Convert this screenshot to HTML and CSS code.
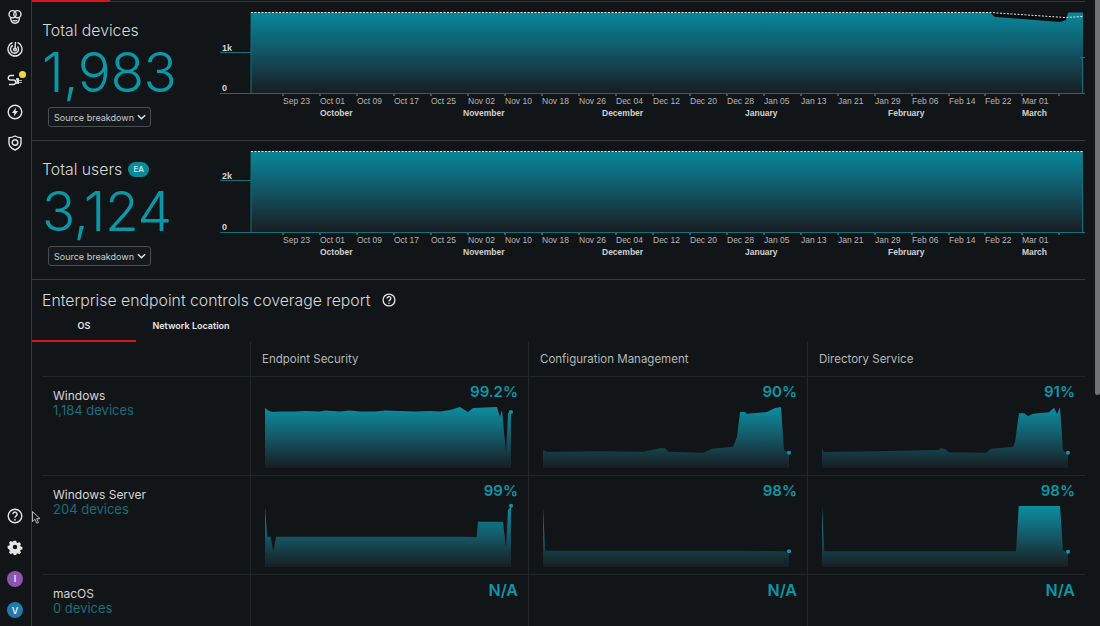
FILE: index.html
```html
<!DOCTYPE html>
<html lang="en">
<head>
    <meta charset="UTF-8">
    <meta name="viewport" content="width=device-width, initial-scale=1.0">
    <title>Devices overview</title>
    <link rel="stylesheet" href="styles.css">
</head>
<body>

    <div class="app">
        <nav class="sidebar">
            <div class="nav-group">
                <svg class="nav-icon" viewBox="0 0 16 16">
                    <circle cx="5.6" cy="5.2" r="3.6"/>
                    <circle cx="10.4" cy="5.2" r="3.6"/>
                    <path d="M3.6 8.5c0 3 1.5 5.7 4.4 5.7s4.400-2.700 4.400-5.700"/>
                    <path d="M5.500 11.800h5"/>
                </svg>
                <svg class="nav-icon" viewBox="0 0 16 16">
                    <path d="M5.500 1.500a7 7 0 1 0 5 0"/>
                    <path d="M6 4.500a4 4 0 1 0 4.500 1"/>
                    <circle cx="8" cy="8.500" r="1.400"/>
                    <path d="M8 8.500 8.500 1"/>
                </svg>
                <div class="nav-alert">
                    <svg class="nav-icon" viewBox="0 0 16 16">
                        <path d="M7 3.500H3.500a2 2 0 0 0 0 4.500h3a2 2 0 0 1 0 4.500H2"/>
                        <path d="M9 7h3M9 11h3"/>
                        <path class="solid" d="M9.500 6.500h2.500v5H9.500zM12 8h3v.8h-3zM12 10h3v.8h-3z"/>
                    </svg>
                    <span class="alert-dot"></span>
                </div>
                <svg class="nav-icon" viewBox="0 0 16 16">
                    <circle cx="8" cy="8" r="6.800"/>
                    <path class="solid" d="M9 3.500 5 9h2.400L6.800 12.500 11 7H8.500z"/>
                </svg>
                <svg class="nav-icon" viewBox="0 0 16 16">
                    <path d="M8 1c2 1.200 3.800 1.700 6 1.800v5c0 3.400-2.500 5.800-6 7.200-3.500-1.400-6-3.800-6-7.200v-5C4.200 2.700 6 2.200 8 1z"/>
                    <circle cx="8" cy="7.500" r="2.800"/>
                </svg>
            </div>
            <div class="nav-group">
                <svg class="nav-icon" viewBox="0 0 16 16">
                    <circle cx="8" cy="8" r="6.800"/>
                    <path d="M5.900 6.200a2.100 2.100 0 1 1 3.300 1.700c-.8.500-1.200 1-1.200 1.900"/>
                    <circle class="solid" cx="8" cy="11.800" r=".9"/>
                </svg>
                <svg class="nav-icon" viewBox="-1 -1 18 18">
                    <path class="solid" fill-rule="evenodd" d="M6.600 1h2.800l.4 1.900 1.300.6 1.700-1 2 2-1 1.700.6 1.300 1.900.4v2.800l-1.900.4-.6 1.300 1 1.700-2 2-1.700-1-1.300.6-.4 1.900H6.600l-.4-1.900-1.300-.6-1.700 1-2-2 1-1.700-.6-1.300L-.3 9.400V6.600l1.900-.4.600-1.300-1-1.700 2-2 1.700 1 1.300-.6zM8 5.500a2.500 2.500 0 1 0 0 5 2.500 2.500 0 0 0 0-5z"/>
                </svg>
                <span class="avatar avatar-purple">I</span>
                <span class="avatar avatar-blue">V</span>
            </div>
        </nav>

        <main class="content">
            <div class="top-bar"><span class="top-bar-active"></span></div>

            <section class="stat-row">
                <div class="stat">
                    <h2 class="stat-title">Total devices</h2>
                    <div class="stat-value">1,983</div>
                    <button class="select">Source breakdown
                        <svg class="chevron" viewBox="0 0 10 6"><path d="M1 1l4 4 4-4"/></svg>
                    </button>
                </div>
                <svg class="trend" viewBox="0 0 866 122">
                    <defs>
                        <linearGradient id="trendFill" gradientUnits="userSpaceOnUse" x1="0" y1="10" x2="0" y2="91">
                            <stop offset="0" stop-color="#07899b"/>
                            <stop offset="0.5" stop-color="#125364"/>
                            <stop offset="1" stop-color="#191d21"/>
                        </linearGradient>
                    </defs>
                    <path class="trend-gap" d="M770 10.500 775 15 840 20 846 18 848 10.500 862 14.500z"/>
                    <path fill="url(#trendFill)" d="M31 91V10.500H770L775 15 840 20 846 18 848 10.500H863V91z"/>
                    <path class="trend-edge" d="M31 10V91M862.500 55V91M0 50.500H31M0 91.500H865M860 55.500H865"/>
                    <path class="trend-forecast" d="M31 10.500H770L845 15.500 863 14.500"/>
                    <text class="axis-y" x="2" y="49">1k</text>
                    <text class="axis-y" x="2" y="89">0</text>
                    <g class="ticks">
                        <path d="M63 92v2M100 92v2M137 92v2M174 92v2M211 92v2M248 92v2M285 92v2M322 92v2M359 92v2M396 92v2M433 92v2M470 92v2M507 92v2M544 92v2M581 92v2M618 92v2M655 92v2M692 92v2M729 92v2M765 92v2M802 92v2M839 92v2"/>
                    </g>
                    <g class="axis-x">
                        <text x="63" y="102">Sep 23</text><text x="100" y="102">Oct 01</text><text x="137" y="102">Oct 09</text><text x="174" y="102">Oct 17</text><text x="211" y="102">Oct 25</text><text x="248" y="102">Nov 02</text><text x="285" y="102">Nov 10</text><text x="322" y="102">Nov 18</text><text x="359" y="102">Nov 26</text><text x="396" y="102">Dec 04</text><text x="433" y="102">Dec 12</text><text x="470" y="102">Dec 20</text><text x="507" y="102">Dec 28</text><text x="544" y="102">Jan 05</text><text x="581" y="102">Jan 13</text><text x="618" y="102">Jan 21</text><text x="655" y="102">Jan 29</text><text x="692" y="102">Feb 06</text><text x="729" y="102">Feb 14</text><text x="765" y="102">Feb 22</text><text x="802" y="102">Mar 01</text>
                    </g>
                    <g class="axis-month">
                        <text x="100" y="114">October</text><text x="243" y="114">November</text><text x="382" y="114">December</text><text x="525" y="114">January</text><text x="668" y="114">February</text><text x="802" y="114">March</text>
                    </g>
                </svg>
            </section>

            <section class="stat-row">
                <div class="stat">
                    <h2 class="stat-title">Total users <span class="badge">EA</span></h2>
                    <div class="stat-value">3,124</div>
                    <button class="select">Source breakdown
                        <svg class="chevron" viewBox="0 0 10 6"><path d="M1 1l4 4 4-4"/></svg>
                    </button>
                </div>
                <svg class="trend" viewBox="0 0 866 122">
                    <path fill="url(#trendFill)" d="M31 91V10.500H863V91z"/>
                    <path class="trend-edge" d="M31 10V91M862.500 10V91M0 39.500H31M0 91.500H865"/>
                    <path class="trend-forecast" d="M31 10.500H863"/>
                    <text class="axis-y" x="2" y="38">2k</text>
                    <text class="axis-y" x="2" y="89">0</text>
                    <g class="ticks">
                        <path d="M63 92v2M100 92v2M137 92v2M174 92v2M211 92v2M248 92v2M285 92v2M322 92v2M359 92v2M396 92v2M433 92v2M470 92v2M507 92v2M544 92v2M581 92v2M618 92v2M655 92v2M692 92v2M729 92v2M765 92v2M802 92v2M839 92v2"/>
                    </g>
                    <g class="axis-x">
                        <text x="63" y="102">Sep 23</text><text x="100" y="102">Oct 01</text><text x="137" y="102">Oct 09</text><text x="174" y="102">Oct 17</text><text x="211" y="102">Oct 25</text><text x="248" y="102">Nov 02</text><text x="285" y="102">Nov 10</text><text x="322" y="102">Nov 18</text><text x="359" y="102">Nov 26</text><text x="396" y="102">Dec 04</text><text x="433" y="102">Dec 12</text><text x="470" y="102">Dec 20</text><text x="507" y="102">Dec 28</text><text x="544" y="102">Jan 05</text><text x="581" y="102">Jan 13</text><text x="618" y="102">Jan 21</text><text x="655" y="102">Jan 29</text><text x="692" y="102">Feb 06</text><text x="729" y="102">Feb 14</text><text x="765" y="102">Feb 22</text><text x="802" y="102">Mar 01</text>
                    </g>
                    <g class="axis-month">
                        <text x="100" y="114">October</text><text x="243" y="114">November</text><text x="382" y="114">December</text><text x="525" y="114">January</text><text x="668" y="114">February</text><text x="802" y="114">March</text>
                    </g>
                </svg>
            </section>

            <section class="report">
                <h2 class="report-title">Enterprise endpoint controls coverage report
                    <svg class="help" viewBox="0 0 16 16">
                        <circle cx="8" cy="8" r="6.800"/>
                        <path d="M5.900 6.200a2.100 2.100 0 1 1 3.300 1.700c-.8.500-1.200 1-1.200 1.900"/>
                        <circle class="solid" cx="8" cy="11.800" r=".9"/>
                    </svg>
                </h2>
                <div class="tabs">
                    <span class="tab tab-active">OS</span>
                    <span class="tab">Network Location</span>
                </div>

                <div class="coverage">
                    <div class="cell head-cell"></div>
                    <div class="cell head-cell">Endpoint Security</div>
                    <div class="cell head-cell">Configuration Management</div>
                    <div class="cell head-cell">Directory Service</div>

                    <div class="cell os-cell">
                        <div class="os-name">Windows</div>
                        <div class="os-count">1,184 devices</div>
                    </div>
                    <div class="cell">
                        <div class="pct">99.2%</div>
                        <svg class="spark" viewBox="0 0 250 68">
                            <defs>
                                <linearGradient id="sparkFill" gradientUnits="userSpaceOnUse" x1="0" y1="0" x2="0" y2="64">
                                    <stop offset="0" stop-color="#0a93a6"/>
                                    <stop offset="0.5" stop-color="#145a69"/>
                                    <stop offset="1" stop-color="#181d21"/>
                                </linearGradient>
                            </defs>
                            <path fill="url(#sparkFill)" d="M0 64V4L4 7 8 8 14 7.500 30 7.500 40 7 55 7.500 60 6.500 75 7.500 85 6.500 95 7.500 110 7.500 120 6.500 135 7 150 7.500 165 7 175 7.500 185 6 195 3 203 8 208 4 232 3 235 13 237 6 241 49 243 9 246 8V64z"/>
                            <circle class="spark-dot" cx="246" cy="8" r="2"/>
                        </svg>
                    </div>
                    <div class="cell">
                        <div class="pct">90%</div>
                        <svg class="spark" viewBox="0 0 250 68">
                            <path fill="url(#sparkFill)" d="M0 64V46L4 48 54 47.300 100 47.700 117 44.300 122 44.300 125 47.700 160 48.700 169 44.700 190 42.700 194 32.700 197 8 202 8 204 9.700 224 8 232 4 238 3 241 46 244 48.300 246 48.700V64z"/>
                            <circle class="spark-dot" cx="246" cy="48.700" r="2"/>
                        </svg>
                    </div>
                    <div class="cell">
                        <div class="pct">91%</div>
                        <svg class="spark" viewBox="0 0 250 68">
                            <path fill="url(#sparkFill)" d="M0 64V44.700L2 48 56 47.300 116 46 119 44.300 123 45 127 48.300 164 48.700 169 44.700 191 42.700 193 37.700 197 9.300 202 9.300 206 12 211 9.700 227 8.300 232 3.700 235 10 238 3.300 241 46 243 48 246 48.700V64z"/>
                            <circle class="spark-dot" cx="246" cy="48.700" r="2"/>
                        </svg>
                    </div>

                    <div class="cell os-cell">
                        <div class="os-name">Windows Server</div>
                        <div class="os-count">204 devices</div>
                    </div>
                    <div class="cell">
                        <div class="pct">99%</div>
                        <svg class="spark" viewBox="0 0 250 68">
                            <path fill="url(#sparkFill)" d="M0 64V4.300L2.300 33.700 5.700 33.700 8.300 48.700 11 33.700 195 33.700 211.700 34 213 18.700 238 18.700 241 45.300 243 7 246 2.700V64z"/>
                            <circle class="spark-dot" cx="246" cy="2.700" r="2"/>
                        </svg>
                    </div>
                    <div class="cell">
                        <div class="pct">98%</div>
                        <svg class="spark" viewBox="0 0 250 68">
                            <path fill="url(#sparkFill)" d="M0 64V5.300L2.300 47.700 193.700 47.700 246 48.300V64z"/>
                            <circle class="spark-dot" cx="246" cy="48.300" r="2"/>
                        </svg>
                    </div>
                    <div class="cell">
                        <div class="pct">98%</div>
                        <svg class="spark" viewBox="0 0 250 68">
                            <path fill="url(#sparkFill)" d="M0 64V3.700L2.300 48.300 194 48.300 196.700 3 238 3 241 47 243.300 48.700 246 48.700V64z"/>
                            <circle class="spark-dot" cx="246" cy="48.700" r="2"/>
                        </svg>
                    </div>

                    <div class="cell os-cell">
                        <div class="os-name">macOS</div>
                        <div class="os-count">0 devices</div>
                    </div>
                    <div class="cell"><div class="pct pct-na">N/A</div></div>
                    <div class="cell"><div class="pct pct-na">N/A</div></div>
                    <div class="cell"><div class="pct pct-na">N/A</div></div>
                </div>
            </section>
        </main>

        <div class="scrollbar"><div class="scrollbar-thumb"></div></div>
    </div>

    <!-- mouse pointer caught in the capture -->
    <svg class="pointer" viewBox="0 0 9 13">
        <path d="M.5.500v10l2.500-2.200 1.800 4 1.700-.8-1.800-3.800h3.300z"/>
    </svg>

</body>
</html>
```

FILE: styles.css
```css
* {
    box-sizing: border-box;
}

html,
body {
    height: 100%;
    margin: 0;
}

body {
    position: relative;
    overflow: hidden;
    background-color: #111517;
    color: #d4d6d7;
    font-family: Inter, "Noto Sans", sans-serif;
}

.app {
    display: flex;
    height: 626px;
    overflow: hidden;
}

/* Sidebar */
.sidebar {
    flex: 0 0 32px;
    display: flex;
    flex-direction: column;
    justify-content: space-between;
    align-items: center;
    padding: 9px 1px 8px 0;
    border-right: 1px solid #35393b;
}

.nav-group {
    display: flex;
    flex-direction: column;
    align-items: center;
    gap: 15.5px;
}

.nav-icon {
    display: block;
    width: 16px;
    height: 16px;
    fill: none;
    stroke: #e4e6e6;
    stroke-width: 1.4;
}

.nav-icon .solid,
.help .solid {
    fill: #e4e6e6;
    stroke: none;
}

.nav-alert {
    position: relative;
}

.alert-dot {
    position: absolute;
    top: -1px;
    right: -3px;
    width: 7px;
    height: 7px;
    border-radius: 50%;
    background-color: #f0d83c;
}

.avatar {
    display: flex;
    justify-content: center;
    align-items: center;
    width: 16px;
    height: 16px;
    border-radius: 50%;
    color: #f0f0f0;
    font-size: 9px;
    font-weight: 600;
}

.avatar-purple {
    background-color: #8f55ae;
}

.avatar-blue {
    background-color: #2179ad;
}

/* Main column */
.content {
    flex: 0 0 1053px;
    min-width: 0;
}

.top-bar {
    height: 2px;
    border-bottom: 1px solid #35393b;
}

.top-bar-active {
    display: block;
    width: 78px;
    height: 2px;
    background-color: #d9141c;
}

.stat-row {
    display: flex;
    height: 139px;
    border-bottom: 1px solid #35393b;
}

.stat {
    flex: 0 0 188px;
    padding: 18px 0 0 10px;
}

.stat-title {
    display: flex;
    align-items: center;
    gap: 6px;
    height: 20px;
    margin: 0;
    color: #d6d8d9;
    font-size: 15.8px;
    font-weight: 300;
}

.badge {
    display: inline-flex;
    justify-content: center;
    align-items: center;
    width: 21px;
    height: 15px;
    border-radius: 8px;
    background-color: #0a8b9b;
    color: #cfe9ec;
    font-size: 8px;
    font-weight: 500;
}

.stat-value {
    height: 56px;
    margin-top: 4px;
    color: #0a98a8;
    font-size: 55px;
    font-weight: 300;
    line-height: 56px;
    letter-spacing: -0.5px;
}

.select {
    display: flex;
    align-items: center;
    gap: 3px;
    width: 103px;
    height: 20px;
    margin: 7px 0 0 6px;
    padding: 0 0 0 5px;
    border: 1px solid #4a4e50;
    border-radius: 3px;
    background-color: #15191b;
    color: #c9cccd;
    font-family: Inter, "Noto Sans", sans-serif;
    font-size: 9px;
    white-space: nowrap;
}

.chevron {
    flex: 0 0 9px;
    width: 9px;
    height: 6px;
    fill: none;
    stroke: #e4e6e6;
    stroke-width: 1.6;
}

/* Trend charts */
.trend {
    flex: 0 0 866px;
    display: block;
    width: 866px;
    height: 122px;
}

.trend-gap {
    fill: #0a0d0f;
}

.trend-edge {
    fill: none;
    stroke: #10727f;
    stroke-width: 1;
}

.trend-forecast {
    fill: none;
    stroke: #e8eeee;
    stroke-width: 1;
    stroke-dasharray: 2 1.500;
}

.ticks path {
    stroke: #8a9496;
    stroke-width: 1;
}

.axis-y {
    fill: #d4d6d7;
    font-family: "Liberation Sans", Arial, sans-serif;
    font-size: 9px;
    font-weight: 700;
}

.axis-x text {
    fill: #b4b7b8;
    font-family: "Liberation Sans", Arial, sans-serif;
    font-size: 8.500px;
}

.axis-month text {
    fill: #cfd1d2;
    font-family: "Liberation Sans", Arial, sans-serif;
    font-size: 8.500px;
    font-weight: 700;
}

/* Coverage report */
.report {
    padding-top: 10px;
}

.report-title {
    display: flex;
    align-items: center;
    gap: 12px;
    height: 20px;
    margin: 0 0 0 10px;
    color: #d6d8d9;
    font-size: 15.8px;
    font-weight: 300;
}

.help {
    width: 14px;
    height: 14px;
    fill: none;
    stroke: #e4e6e6;
    stroke-width: 1.500;
}

.tabs {
    display: flex;
    height: 27px;
    margin-top: 5px;
}

.tab {
    flex: 0 0 110px;
    padding-top: 5px;
    color: #e8e9e9;
    font-size: 9px;
    font-weight: 600;
    text-align: center;
}

.tab-active {
    flex-basis: 104px;
    border-bottom: 2px solid #d9141c;
}

.coverage {
    display: grid;
    grid-template-columns: 208px 278px 279px 278px;
    grid-template-rows: 35px 99px 99px 60px;
    margin: 0 10px;
}

.cell {
    min-width: 0;
    padding: 5px 10px 0 14px;
    border-bottom: 1px solid #22272a;
    border-left: 1px solid #22272a;
}

.cell:nth-child(4n + 1) {
    border-left: none;
}

.head-cell {
    padding: 10px 0 0 11px;
    color: #b4b7b8;
    font-size: 11.500px;
}

.os-cell {
    padding: 11px 0 0 11px;
}

.os-name {
    color: #d4d6d7;
    font-size: 12px;
    line-height: 15px;
}

.os-count {
    color: #1c6c7b;
    font-size: 13px;
    line-height: 15px;
}

.pct {
    color: #0a98a8;
    font-size: 15px;
    font-weight: 600;
    line-height: 20px;
    text-align: right;
}

.pct-na {
    font-size: 16px;
}

.spark {
    display: block;
    width: 250px;
    height: 68px;
    margin-top: 2px;
}

.spark-dot {
    fill: #0a98a8;
}

/* Window scrollbar */
.scrollbar {
    flex: 0 0 15px;
    display: flex;
    justify-content: flex-end;
}

.scrollbar-thumb {
    width: 5px;
    height: 395px;
    border-radius: 0 0 3px 3px;
    background-color: #6f7376;
}

.pointer {
    position: absolute;
    top: 511px;
    left: 32px;
    width: 9px;
    height: 13px;
    fill: #16191b;
    stroke: #d9dbdc;
    stroke-width: 0.8;
}
```
